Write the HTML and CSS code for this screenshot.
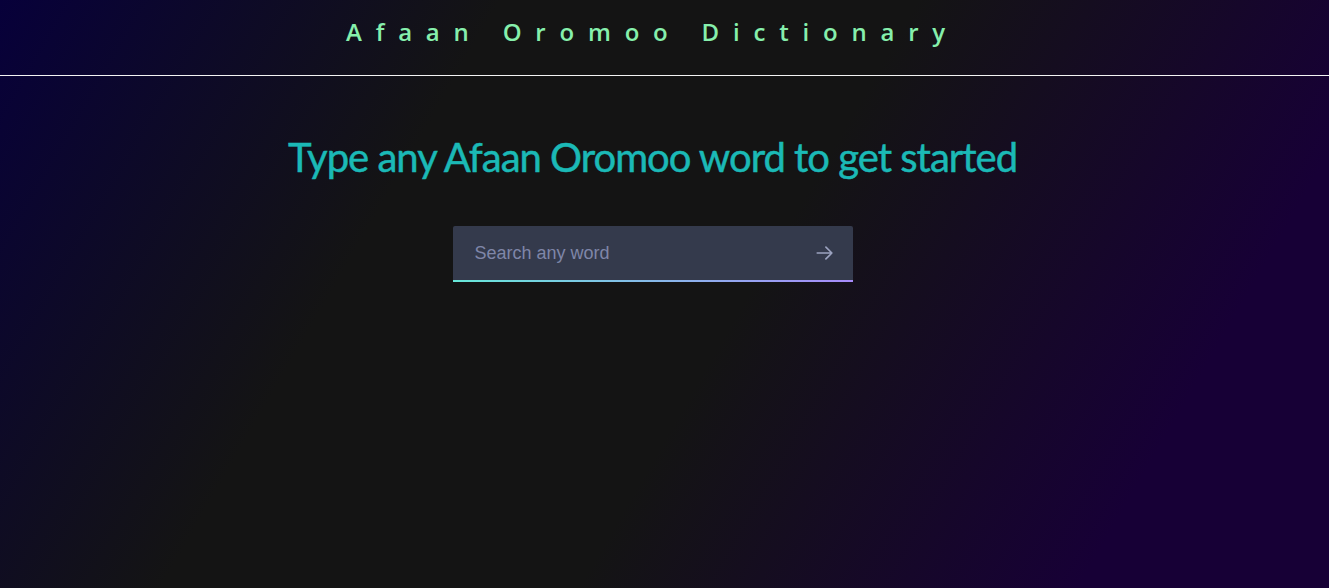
FILE: index.html
```html
<!DOCTYPE html>
<html lang="en">
<head>
<meta charset="utf-8">
<title>Afaan Oromoo Dictionary</title>
<link rel="stylesheet" href="styles.css">
</head>
<body>
<div class="page">
  <header class="site-header">
    <h1 class="brand">Afaan Oromoo Dictionary</h1>
  </header>
  <main class="main">
    <h2 class="lead">Type any Afaan Oromoo word to get started</h2>
    <form class="search" onsubmit="return false">
      <input class="search-input" type="text" placeholder="Search any word">
      <button class="search-btn" type="submit" aria-label="Search">
        <svg width="22" height="22" viewBox="0 0 24 24" fill="none" stroke="currentColor" stroke-width="1.8" stroke-linecap="round" stroke-linejoin="round"><path d="M3.5 12h16M13 5.5l6.5 6.5-6.5 6.5"/></svg>
      </button>
    </form>
  </main>
</div>
</body>
</html>
```
FILE: styles.css
```css
* { box-sizing: border-box; }
html, body { margin: 0; padding: 0; height: 100%; }
body {
  background: linear-gradient(120deg, #07003a 0%, #141414 30%, #141414 55%, #170036 85%, #170036 100%);
  font-family: "Open Sans", "Liberation Sans", sans-serif;
  color: #fff;
}
.page { min-height: 100vh; display: flex; flex-direction: column; }
.site-header {
  height: 76px;
  border-bottom: 1px solid #f4f4f4;
  display: flex;
  align-items: center;
  justify-content: center;
  padding-right: 24px;
}
.brand {
  margin: 0;
  font-size: 24px;
  font-weight: 600;
  letter-spacing: 0.575em;
  color: #86efac;
  line-height: 1;
  transform: translateY(-6px);
}
.main {
  display: flex;
  flex-direction: column;
  align-items: center;
  padding-top: 57px;
  padding-right: 24px;
}
.lead {
  margin: 0;
  font-family: Lato, "Noto Sans", sans-serif;
  font-weight: 400;
  font-size: 40px;
  line-height: 48px;
  color: #1bb9b6;
  letter-spacing: -1px;
  -webkit-text-stroke: 0.5px #1bb9b6;
}
.search {
  margin-top: 45px;
  width: 400px;
  height: 56px;
  display: flex;
  align-items: center;
  background: #343a4c;
  border-radius: 2px 2px 0 0;
  position: relative;
}
.search::after {
  content: "";
  position: absolute;
  left: 0; right: 0; bottom: 0;
  height: 2px;
  background: linear-gradient(90deg, #67e8d9, #a78bfa);
}
.search-input {
  flex: 1;
  height: 100%;
  background: transparent;
  border: 0;
  outline: none;
  padding: 0 0 2px 22px;
  font-family: "Liberation Sans", Arial, sans-serif;
  font-size: 18px;
  color: #e5e7f0;
}
.search-input::placeholder { color: #7f86a8; }
.search-btn {
  width: 56px;
  height: 100%;
  background: transparent;
  border: 0;
  color: #9ba2bf;
  display: flex;
  align-items: center;
  justify-content: center;
  padding: 0 0 2px 0;
  cursor: pointer;
}
```
